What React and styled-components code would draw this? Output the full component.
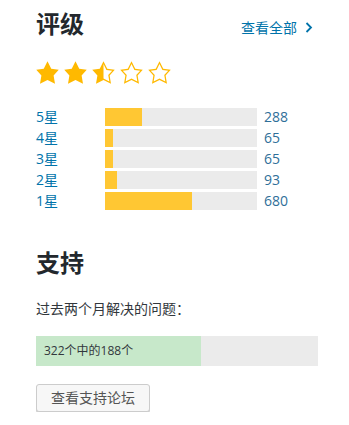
import React from "react";
import styled, { createGlobalStyle } from "styled-components";

const Global = createGlobalStyle`
  html, body { margin: 0; padding: 0; background: #fff; }
  body {
    font-family: "Open Sans", "Noto Sans CJK SC", sans-serif;
    color: #32373c;
    font-size: 14px;
  }
`;

const Page = styled.div`
  padding: 9px 31px 0 36px;
  width: 282px;
`;

const Header = styled.div`
  display: flex;
  align-items: baseline;
  justify-content: space-between;
`;

const Title = styled.h2`
  margin: 0;
  font-size: 24px;
  line-height: 30px;
  font-weight: 600;
  color: #23282d;
  margin-top: ${(p) => p.$top || 0}px;
`;

const SeeAll = styled.a`
  display: inline-flex;
  align-items: center;
  gap: 8px;
  font-size: 14px;
  color: #0073aa;
  text-decoration: none;
  margin-right: 5px;
`;

const Stars = styled.div`
  display: flex;
  gap: 3px;
  margin: 21px 0 0 0;
  margin-left: -1px;
`;

const Rows = styled.div`
  display: flex;
  flex-direction: column;
  gap: 3px;
  margin-top: 23px;
`;

const Row = styled.div`
  display: flex;
  align-items: center;
  height: 18px;
`;

const Label = styled.a`
  width: 69px;
  font-size: 14px;
  line-height: 18px;
  color: #0073aa;
  text-decoration: none;
`;

const Track = styled.div`
  width: 152px;
  height: 18px;
  background: #ebebeb;
`;

const Fill = styled.div`
  height: 100%;
  background: #ffc733;
`;

const Count = styled.span`
  margin-left: 7px;
  font-size: 14px;
  line-height: 18px;
  color: #2f6f99;
`;

const Note = styled.p`
  margin: 21px 0 0;
  font-size: 14px;
  line-height: 20px;
  color: #32373c;
`;

const Progress = styled.div`
  margin-top: 17px;
  height: 30px;
  background: #ebebeb;
  position: relative;
`;

const ProgressFill = styled.div`
  height: 100%;
  background: #c7e8ca;
`;

const ProgressText = styled.span`
  position: absolute;
  left: 8px;
  top: 0;
  line-height: 30px;
  font-size: 12px;
  color: #32373c;
`;

const Button = styled.button`
  margin-top: 18px;
  height: 28px;
  padding: 0 14px;
  background: #f7f7f7;
  border: 1px solid #cccccc;
  border-radius: 3px;
  box-shadow: 0 1px 0 #cccccc;
  font-family: "Open Sans", "Noto Sans CJK SC", sans-serif;
  font-size: 14px;
  color: #555;
  line-height: 26px;
  cursor: pointer;
`;

const FULL = "M10 1l3 6 6 .75-4.12 4.62L16 19l-6-3-6 3 1.13-6.63L1 7.75 7 7z";
const EMPTY =
  "M10 1L7 7l-6 .75 4.13 4.62L4 19l6-3 6 3-1.12-6.63L19 7.75 13 7zm0 2.24l2.34 4.69 4.65.58-3.18 3.56.87 5.15L10 14.88l-4.68 2.34.87-5.15-3.18-3.56 4.65-.58z";
const HALF =
  "M10 1L7 7l-6 .75 4.13 4.62L4 19l6-3 6 3-1.12-6.63L19 7.75 13 7zm0 2.24l2.34 4.69 4.65.58-3.18 3.56.87 5.15L10 14.88z";

const Star = ({ d }) => (
  <svg width="25" height="25" viewBox="0 0 20 20">
    <path d={d} fill="#ffb900" fillRule="evenodd" />
  </svg>
);

const data = [
  ["5星", 288],
  ["4星", 65],
  ["3星", 65],
  ["2星", 93],
  ["1星", 680],
];
const total = data.reduce((s, [, n]) => s + n, 0);

export default function App() {
  return (
    <>
      <Global />
      <Page>
        <Header>
          <Title>评级</Title>
          <SeeAll href="#">
            查看全部
            <svg width="8" height="11" viewBox="0 0 8 11">
              <path d="M1.5 1l4.5 4.5L1.5 10" fill="none" stroke="#0073aa" strokeWidth="1.8" />
            </svg>
          </SeeAll>
        </Header>
        <Stars>
          <Star d={FULL} />
          <Star d={FULL} />
          <Star d={HALF} />
          <Star d={EMPTY} />
          <Star d={EMPTY} />
        </Stars>
        <Rows>
          {data.map(([label, n]) => (
            <Row key={label}>
              <Label href="#">{label}</Label>
              <Track>
                <Fill style={{ width: `${(n / total) * 100}%` }} />
              </Track>
              <Count>{n}</Count>
            </Row>
          ))}
        </Rows>
        <Title $top={38}>支持</Title>
        <Note>过去两个月解决的问题：</Note>
        <Progress>
          <ProgressFill style={{ width: `${(188 / 322) * 100}%` }} />
          <ProgressText>322个中的188个</ProgressText>
        </Progress>
        <Button>查看支持论坛</Button>
      </Page>
    </>
  );
}
